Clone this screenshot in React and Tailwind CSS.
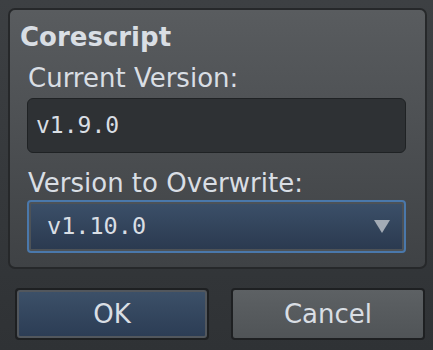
import React from 'react';

const App = () => {
  return (
    <div
      className="w-[433px] h-[350px] bg-gradient-to-b from-[#3d4043] to-[#2f3235] px-[8px] pt-[8px] text-[#d9dee4]"
      style={{ fontFamily: '"DejaVu Sans", sans-serif' }}
    >
      <div className="h-[261px] w-[419px] rounded-[7px] border-2 border-[#26282a] bg-gradient-to-b from-[#595c5f] to-[#3f4245] px-[18px] pt-[12px]">
        <div className="text-[26px] font-bold leading-[30px] -ml-[8px]">Corescript</div>
        <div className="text-[26px] leading-[30px] mt-[11px]">Current Version:</div>
        <div className="mt-[5px] h-[55px] w-[379px] rounded-[6px] border border-[#1f2224] bg-[#2e3134] flex items-center pl-[8px] -ml-[1px]">
          <span className="text-[23px]" style={{ fontFamily: '"DejaVu Sans Mono", monospace' }}>v1.9.0</span>
        </div>
        <div className="text-[26px] leading-[30px] mt-[15px]">Version to Overwrite:</div>
        <div className="mt-[2px] h-[53px] w-[379px] -ml-[1px] rounded-[4px] border-2 border-[#4a78ab] bg-[#4a78ab] p-0">
          <div className="h-full w-full border-2 border-[#4d5257] bg-gradient-to-b from-[#3b4f68] to-[#2b3a50] rounded-[2px] flex items-center pl-[16px] pr-[12px]">
            <span className="text-[23.5px] flex-1" style={{ fontFamily: '"DejaVu Sans Mono", monospace' }}>v1.10.0</span>
            <svg width="16" height="13" viewBox="0 0 16 13">
              <polygon points="0,0 16,0 8,13" fill="#a3abb5" />
            </svg>
          </div>
        </div>
      </div>
      <div className="flex gap-[22px] mt-[19px] ml-[7px]">
        <button className="h-[52px] w-[195px] rounded-[4px] border-2 border-[#1e2022] bg-[#1e2022] p-0">
          <div className="h-full w-full rounded-[3px] border-2 border-[#52575d] bg-gradient-to-b from-[#3c5068] to-[#2c3d55] flex items-center justify-center text-[26px]">
            OK
          </div>
        </button>
        <button className="h-[52px] w-[195px] rounded-[4px] border-2 border-[#1e2022] bg-gradient-to-b from-[#5d6164] to-[#505457] flex items-center justify-center text-[26px]">
          Cancel
        </button>
      </div>
    </div>
  );
};

export default App;
